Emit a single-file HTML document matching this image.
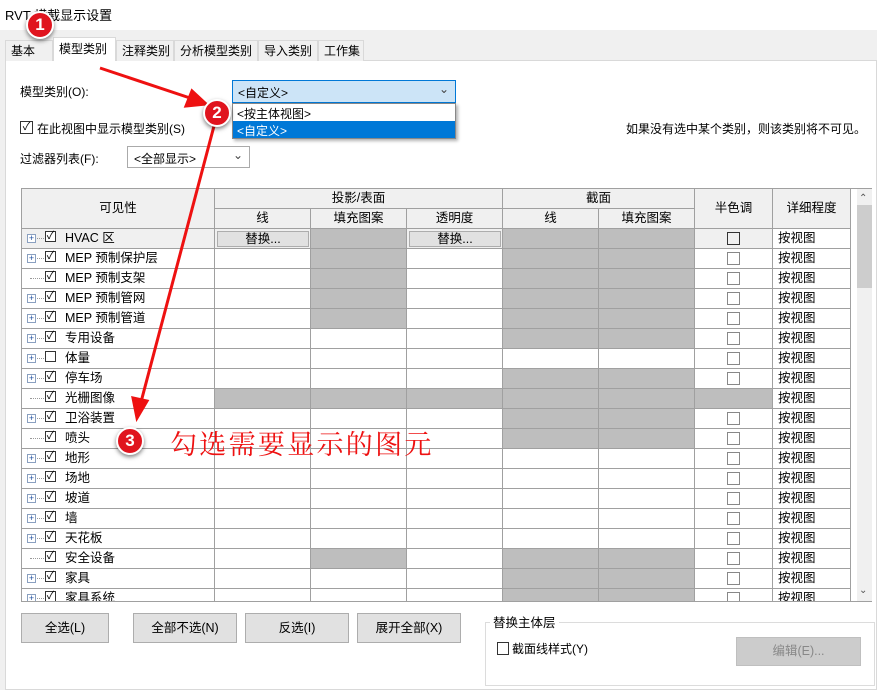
<!DOCTYPE html>
<html><head><meta charset="utf-8"><style>
*{margin:0;padding:0;box-sizing:border-box}
body{width:877px;height:690px;overflow:hidden;background:#f0f0f0;font-family:"Liberation Sans","Noto Sans CJK SC",sans-serif;font-size:12px;color:#000;position:relative}
.a{position:absolute}
.tab{position:absolute;top:40px;height:21px;border:1px solid #d9d9d9;border-bottom:none;background:#f0f0f0;padding:2px 5px;white-space:nowrap;line-height:16px}
.h{background:repeating-conic-gradient(#9a9a9a 0 25%,#e2e2e2 0 50%) 0 0/2px 2px}
table{border-collapse:collapse;table-layout:fixed;position:absolute;left:21px;top:188px}
td{border:1px solid #a0a0a0;height:20px;padding:0;font-size:12.5px;white-space:nowrap;overflow:hidden;line-height:17px}
thead td{background:#f0f0f0;text-align:center}
.n{position:relative;padding-left:43px}
.pl{position:absolute;left:5px;top:5px;width:9px;height:9px;border:1px solid #8aa0c0;font-size:9px;line-height:7px;text-align:center;color:#2050a0;background:#fff}
.dt{position:absolute;left:15px;top:9px;width:7px;border-top:1px dotted #999}
.cb{position:absolute;left:23px;top:2px;width:11px;height:11px;border:1px solid #333;background:#fff;font-size:11px;line-height:9px;text-align:center}
.hc{text-align:center}
.hc span{display:inline-block;width:13px;height:13px;border:1px solid #888;vertical-align:middle}
.dl{padding-left:5px}
.btn{position:absolute;background:#e1e1e1;border:1px solid #adadad;text-align:center;font-size:12.5px}
.rb{display:inline-block;width:92px;height:16px;margin:1px 0 0 2px;background:#e1e1e1;border:1px solid #adadad;text-align:center;line-height:14px}
.circ{position:absolute;width:28px;height:28px;border-radius:50%;background:#e0141e;border:2px solid #fff;box-shadow:0 2px 4px rgba(0,0,0,.5);color:#fff;font-weight:bold;font-size:17px;text-align:center;line-height:24px}
</style></head><body>
<div class="a" style="left:0;top:0;width:877px;height:30px;background:#fff"></div>
<div class="a" style="left:5px;top:5px;font-size:13px">RVT 横截显示设置</div>
<div class="a" style="left:5px;top:60px;width:872px;height:630px;background:#fff;border:1px solid #d9d9d9"></div>
<div class="tab" style="left:5px;width:48px">基本</div>
<div class="tab" style="left:53px;top:37px;height:24px;width:63px;background:#fff;border-color:#d9d9d9;padding-top:3px">模型类别</div>
<div class="tab" style="left:116px;width:58px">注释类别</div>
<div class="tab" style="left:174px;width:84px">分析模型类别</div>
<div class="tab" style="left:258px;width:60px">导入类别</div>
<div class="tab" style="left:318px;width:46px">工作集</div>

<div class="a" style="left:20px;top:83px">模型类别(O):</div>
<div class="a" style="left:232px;top:80px;width:224px;height:23px;background:#cce4f7;border:1px solid #0078d7;padding:3px 5px">&lt;自定义&gt;<span style="position:absolute;right:6px;top:1px;color:#444">&#8964;</span></div>
<div class="a" style="left:232px;top:103px;width:224px;height:36px;background:#fff;border:1px solid #888;box-shadow:2px 2px 3px rgba(0,0,0,.3)">
<div style="height:17px;padding:1px 4px">&lt;按主体视图&gt;</div>
<div style="height:17px;padding:1px 4px;background:#0078d7;color:#fff">&lt;自定义&gt;</div></div>
<div class="a" style="left:20px;top:121px;width:13px;height:13px;border:1px solid #333;font-size:11px;line-height:11px;text-align:center">&#10003;</div>
<div class="a" style="left:37px;top:120px">在此视图中显示模型类别(S)</div>
<div class="a" style="right:11px;top:120px">如果没有选中某个类别，则该类别将不可见。</div>
<div class="a" style="left:20px;top:150px">过滤器列表(F):</div>
<div class="a" style="left:127px;top:146px;width:123px;height:22px;border:1px solid #aaa;background:#fff;padding:3px 6px">&lt;全部显示&gt;<span style="position:absolute;right:6px;top:1px;color:#444">&#8964;</span></div>

<div class="a" style="left:21px;top:188px;width:851px;height:414px;border:1px solid #a0a0a0;background:#fff"></div>
<div class="a" style="left:857px;top:189px;width:15px;height:412px;background:#f0f0f0"></div>
<div class="a" style="left:859px;top:193px;font-size:10px;color:#555">&#8963;</div>
<div class="a" style="left:857px;top:205px;width:15px;height:83px;background:#cdcdcd"></div>
<div class="a" style="left:859px;top:585px;font-size:10px;color:#555">&#8964;</div>
<div class="a" style="left:21px;top:188px;width:836px;height:413px;overflow:hidden">
<table style="left:0;top:0">
<colgroup><col style="width:193px"><col style="width:96px"><col style="width:96px"><col style="width:96px"><col style="width:96px"><col style="width:96px"><col style="width:78px"><col style="width:78px"><col style="width:6px"></colgroup>
<thead>
<tr><td rowspan="2">可见性</td><td colspan="3">投影/表面</td><td colspan="2">截面</td><td rowspan="2">半色调</td><td rowspan="2">详细程度</td><td rowspan="2" style="background:#fff;border:none"></td></tr>
<tr><td>线</td><td>填充图案</td><td>透明度</td><td>线</td><td>填充图案</td></tr>
</thead>
<tbody>
<tr><td class="n" style="background:#f0f0f0"><span class="pl">+</span><span class="dt"></span><span class="cb">&#10003;</span>HVAC 区</td><td style="background:#f0f0f0"><span class="rb">替换...</span></td><td class="h"></td><td style="background:#f0f0f0"><span class="rb">替换...</span></td><td class="h"></td><td class="h"></td><td class="hc" style="background:#f0f0f0"><span style="border-color:#333"></span></td><td class="dl">按视图</td><td style="border:none"></td></tr>
<tr><td class="n"><span class="pl">+</span><span class="dt"></span><span class="cb">&#10003;</span>MEP 预制保护层</td><td></td><td class="h"></td><td></td><td class="h"></td><td class="h"></td><td class="hc"><span></span></td><td class="dl">按视图</td><td style="border:none"></td></tr>
<tr><td class="n"><span class="dt" style="left:8px;width:14px"></span><span class="cb">&#10003;</span>MEP 预制支架</td><td></td><td class="h"></td><td></td><td class="h"></td><td class="h"></td><td class="hc"><span></span></td><td class="dl">按视图</td><td style="border:none"></td></tr>
<tr><td class="n"><span class="pl">+</span><span class="dt"></span><span class="cb">&#10003;</span>MEP 预制管网</td><td></td><td class="h"></td><td></td><td class="h"></td><td class="h"></td><td class="hc"><span></span></td><td class="dl">按视图</td><td style="border:none"></td></tr>
<tr><td class="n"><span class="pl">+</span><span class="dt"></span><span class="cb">&#10003;</span>MEP 预制管道</td><td></td><td class="h"></td><td></td><td class="h"></td><td class="h"></td><td class="hc"><span></span></td><td class="dl">按视图</td><td style="border:none"></td></tr>
<tr><td class="n"><span class="pl">+</span><span class="dt"></span><span class="cb">&#10003;</span>专用设备</td><td></td><td></td><td></td><td class="h"></td><td class="h"></td><td class="hc"><span></span></td><td class="dl">按视图</td><td style="border:none"></td></tr>
<tr><td class="n"><span class="pl">+</span><span class="dt"></span><span class="cb"></span>体量</td><td></td><td></td><td></td><td></td><td></td><td class="hc"><span></span></td><td class="dl">按视图</td><td style="border:none"></td></tr>
<tr><td class="n"><span class="pl">+</span><span class="dt"></span><span class="cb">&#10003;</span>停车场</td><td></td><td></td><td></td><td class="h"></td><td class="h"></td><td class="hc"><span></span></td><td class="dl">按视图</td><td style="border:none"></td></tr>
<tr><td class="n"><span class="dt" style="left:8px;width:14px"></span><span class="cb">&#10003;</span>光栅图像</td><td class="h"></td><td class="h"></td><td class="h"></td><td class="h"></td><td class="h"></td><td class="h"></td><td class="dl">按视图</td><td style="border:none"></td></tr>
<tr><td class="n"><span class="pl">+</span><span class="dt"></span><span class="cb">&#10003;</span>卫浴装置</td><td></td><td></td><td></td><td class="h"></td><td class="h"></td><td class="hc"><span></span></td><td class="dl">按视图</td><td style="border:none"></td></tr>
<tr><td class="n"><span class="dt" style="left:8px;width:14px"></span><span class="cb">&#10003;</span>喷头</td><td></td><td></td><td></td><td class="h"></td><td class="h"></td><td class="hc"><span></span></td><td class="dl">按视图</td><td style="border:none"></td></tr>
<tr><td class="n"><span class="pl">+</span><span class="dt"></span><span class="cb">&#10003;</span>地形</td><td></td><td></td><td></td><td></td><td></td><td class="hc"><span></span></td><td class="dl">按视图</td><td style="border:none"></td></tr>
<tr><td class="n"><span class="pl">+</span><span class="dt"></span><span class="cb">&#10003;</span>场地</td><td></td><td></td><td></td><td></td><td></td><td class="hc"><span></span></td><td class="dl">按视图</td><td style="border:none"></td></tr>
<tr><td class="n"><span class="pl">+</span><span class="dt"></span><span class="cb">&#10003;</span>坡道</td><td></td><td></td><td></td><td></td><td></td><td class="hc"><span></span></td><td class="dl">按视图</td><td style="border:none"></td></tr>
<tr><td class="n"><span class="pl">+</span><span class="dt"></span><span class="cb">&#10003;</span>墙</td><td></td><td></td><td></td><td></td><td></td><td class="hc"><span></span></td><td class="dl">按视图</td><td style="border:none"></td></tr>
<tr><td class="n"><span class="pl">+</span><span class="dt"></span><span class="cb">&#10003;</span>天花板</td><td></td><td></td><td></td><td></td><td></td><td class="hc"><span></span></td><td class="dl">按视图</td><td style="border:none"></td></tr>
<tr><td class="n"><span class="dt" style="left:8px;width:14px"></span><span class="cb">&#10003;</span>安全设备</td><td></td><td class="h"></td><td></td><td class="h"></td><td class="h"></td><td class="hc"><span></span></td><td class="dl">按视图</td><td style="border:none"></td></tr>
<tr><td class="n"><span class="pl">+</span><span class="dt"></span><span class="cb">&#10003;</span>家具</td><td></td><td></td><td></td><td class="h"></td><td class="h"></td><td class="hc"><span></span></td><td class="dl">按视图</td><td style="border:none"></td></tr>
<tr><td class="n"><span class="pl">+</span><span class="dt"></span><span class="cb">&#10003;</span>家具系统</td><td></td><td></td><td></td><td class="h"></td><td class="h"></td><td class="hc"><span></span></td><td class="dl">按视图</td><td style="border:none"></td></tr>
</tbody></table></div>

<div class="btn" style="left:21px;top:613px;width:88px;height:30px;line-height:28px">全选(L)</div>
<div class="btn" style="left:133px;top:613px;width:104px;height:30px;line-height:28px">全部不选(N)</div>
<div class="btn" style="left:245px;top:613px;width:104px;height:30px;line-height:28px">反选(I)</div>
<div class="btn" style="left:357px;top:613px;width:104px;height:30px;line-height:28px">展开全部(X)</div>
<div class="a" style="left:485px;top:622px;width:390px;height:64px;border:1px solid #dcdcdc"></div>
<div class="a" style="left:490px;top:612px;background:#fff;padding:0 3px;font-size:12.5px">替换主体层</div>
<div class="a" style="left:497px;top:642px;width:12px;height:13px;border:1px solid #333"></div>
<div class="a" style="left:512px;top:640px">截面线样式(Y)</div>
<div class="btn" style="left:736px;top:637px;width:125px;height:29px;line-height:27px;background:#cccccc;border-color:#bfbfbf;color:#888">编辑(E)...</div>

<svg class="a" style="left:0;top:0" width="877" height="690">
<g stroke="#ee1111" stroke-width="3" fill="#ee1111">
<line x1="100" y1="68" x2="196" y2="100"/>
<polygon points="206,104 186,106 192,91"/>
<line x1="214" y1="126" x2="141" y2="402"/>
<polygon points="137,418 133,398 147,401"/>
</g>
</svg>
<div class="circ" style="left:26px;top:11px">1</div>
<div class="circ" style="left:203px;top:99px">2</div>
<div class="circ" style="left:116px;top:427px">3</div>
<div class="a" style="left:170px;top:423px;color:#ee1111;font-size:27px;letter-spacing:2.3px;font-family:'Noto Serif CJK SC',serif">勾选需要显示的图元</div>
</body></html>
